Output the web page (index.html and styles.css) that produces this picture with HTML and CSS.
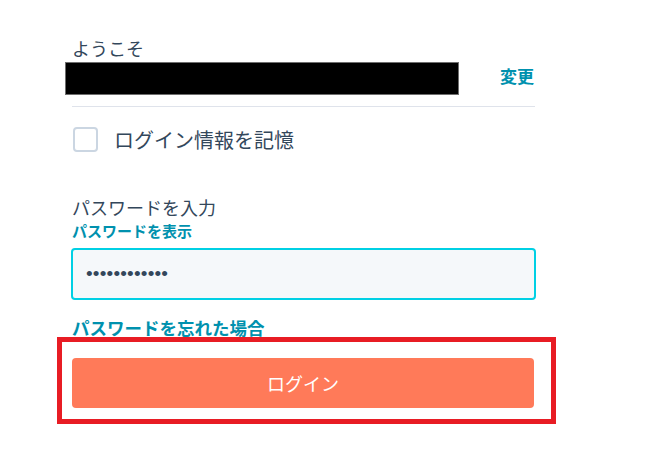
FILE: index.html
```html
<!DOCTYPE html>
<html lang="ja">
<head>
<meta charset="utf-8">
<link rel="stylesheet" href="styles.css">
</head>
<body>
<div class="form">
  <div class="welcome">ようこそ</div>
  <div class="account">
    <div class="redacted"></div>
    <a class="link change">変更</a>
  </div>
  <div class="divider"></div>
  <label class="remember">
    <span class="checkbox"></span>
    <span class="remember-text">ログイン情報を記憶</span>
  </label>
  <div class="pw-label">パスワードを入力</div>
  <a class="link show-pw">パスワードを表示</a>
  <div class="pw-input"><span class="dots">••••••••••••</span></div>
  <a class="link forgot">パスワードを忘れた場合</a>
  <div class="highlight">
    <button class="login">ログイン</button>
  </div>
</div>
</body>
</html>
```
FILE: styles.css
```css
html, body {
  margin: 0;
  padding: 0;
  background: #ffffff;
}
body {
  font-family: "Noto Sans CJK JP", "Noto Sans", sans-serif;
  color: #33475b;
}
.form {
  margin-left: 72px;
  width: 463px;
  padding-top: 36px;
  display: flex;
  flex-direction: column;
}
.welcome {
  font-size: 18px;
  line-height: 24px;
  height: 24px;
}
.account {
  margin-top: 2px;
  margin-left: -7px;
  display: flex;
  align-items: center;
  justify-content: space-between;
  height: 33px;
}
.redacted {
  width: 394px;
  height: 33px;
  box-sizing: border-box;
  background: #000;
  border: 1px solid #6e6e6e;
}
.link {
  color: #0091ae;
  font-weight: 700;
  display: block;
}
.change {
  font-size: 17px;
  line-height: 22px;
  margin-top: -5px;
  margin-right: 1px;
}
.divider {
  margin-top: 11px;
  height: 1px;
  background: #dfe3eb;
}
.remember {
  margin-top: 20px;
  display: flex;
  align-items: center;
  gap: 16px;
  height: 25px;
}
.checkbox {
  width: 25px;
  height: 25px;
  box-sizing: border-box;
  border: 2px solid #cbd6e2;
  border-radius: 4px;
  background: #fff;
  margin-left: 1px;
}
.remember-text {
  font-size: 20px;
  line-height: 25px;
}
.pw-label {
  margin-top: 43px;
  font-size: 18px;
  line-height: 24px;
}
.show-pw {
  margin-top: 2px;
  font-size: 15px;
  line-height: 20px;
}
.pw-input {
  margin-top: 7px;
  margin-left: -1px;
  width: 465px;
  height: 52px;
  box-sizing: border-box;
  border: 2px solid #00d0e4;
  border-radius: 4px;
  background: #f5f8fa;
  display: flex;
  align-items: center;
  padding-left: 13px;
}
.dots {
  font-family: "Liberation Sans", sans-serif;
  font-size: 19px;
  color: #33475b;
  letter-spacing: 0.2px;
}
.forgot {
  margin-top: 18px;
  font-size: 17.5px;
  line-height: 20px;
}
.highlight {
  margin-top: -1px;
  margin-left: -15px;
  width: 499px;
  box-sizing: border-box;
  border: 5px solid #e81c24;
  padding: 16px 17px 11px 10px;
}
.login {
  display: block;
  width: 462px;
  height: 50px;
  border: none;
  border-radius: 4px;
  background: #ff7a59;
  color: #ffffff;
  font-family: "Noto Sans CJK JP", "Noto Sans", sans-serif;
  font-size: 18px;
  padding: 0;
}
```
